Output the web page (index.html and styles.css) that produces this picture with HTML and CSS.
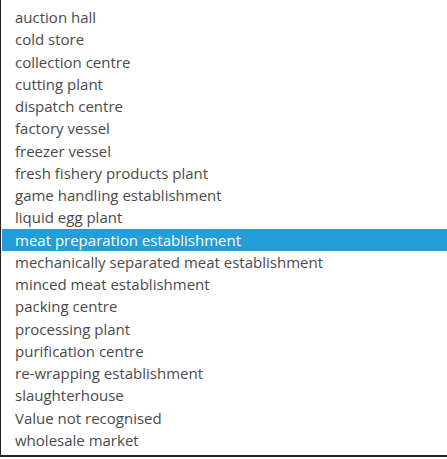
FILE: index.html
```html
<!DOCTYPE html>
<html lang="en">
<head>
	<meta charset="UTF-8">
	<title>establishment types</title>
	<link rel="stylesheet" href="styles.css">
</head>
<body>
	<div class="picker">
		<ul class="options">
			<li>auction hall</li>
			<li>cold store</li>
			<li>collection centre</li>
			<li>cutting plant</li>
			<li>dispatch centre</li>
			<li>factory vessel</li>
			<li>freezer vessel</li>
			<li>fresh fishery products plant</li>
			<li>game handling establishment</li>
			<li>liquid egg plant</li>
			<li class="selected">meat preparation establishment</li>
			<li>mechanically separated meat establishment</li>
			<li>minced meat establishment</li>
			<li>packing centre</li>
			<li>processing plant</li>
			<li>purification centre</li>
			<li>re-wrapping establishment</li>
			<li>slaughterhouse</li>
			<li>Value not recognised</li>
			<li>wholesale market</li>
		</ul>
	</div>
</body>
</html>
```

FILE: styles.css
```css
*{padding: 0;margin: 0;}
*,*:after,*:before{box-sizing:border-box;}
html,body{height: 100%;width: 100%;background: #fff;}
.picker{
	width: 100%;
	height: 457px;
	border-left: 1px solid #222;
	border-bottom: 2px solid #222;
	padding: 6px 0 0 1px;
	font-family: "Open Sans", "Liberation Sans", sans-serif;
	font-size: 15px;
	color: #4a4a4a;
}
.options{list-style: none;}
.options li{
	height: 22.25px;
	line-height: 22.25px;
	padding-left: 13px;
	white-space: nowrap;
}
.options li.selected{
	background-color: #249dd9;
	color: #fff;
}
```
